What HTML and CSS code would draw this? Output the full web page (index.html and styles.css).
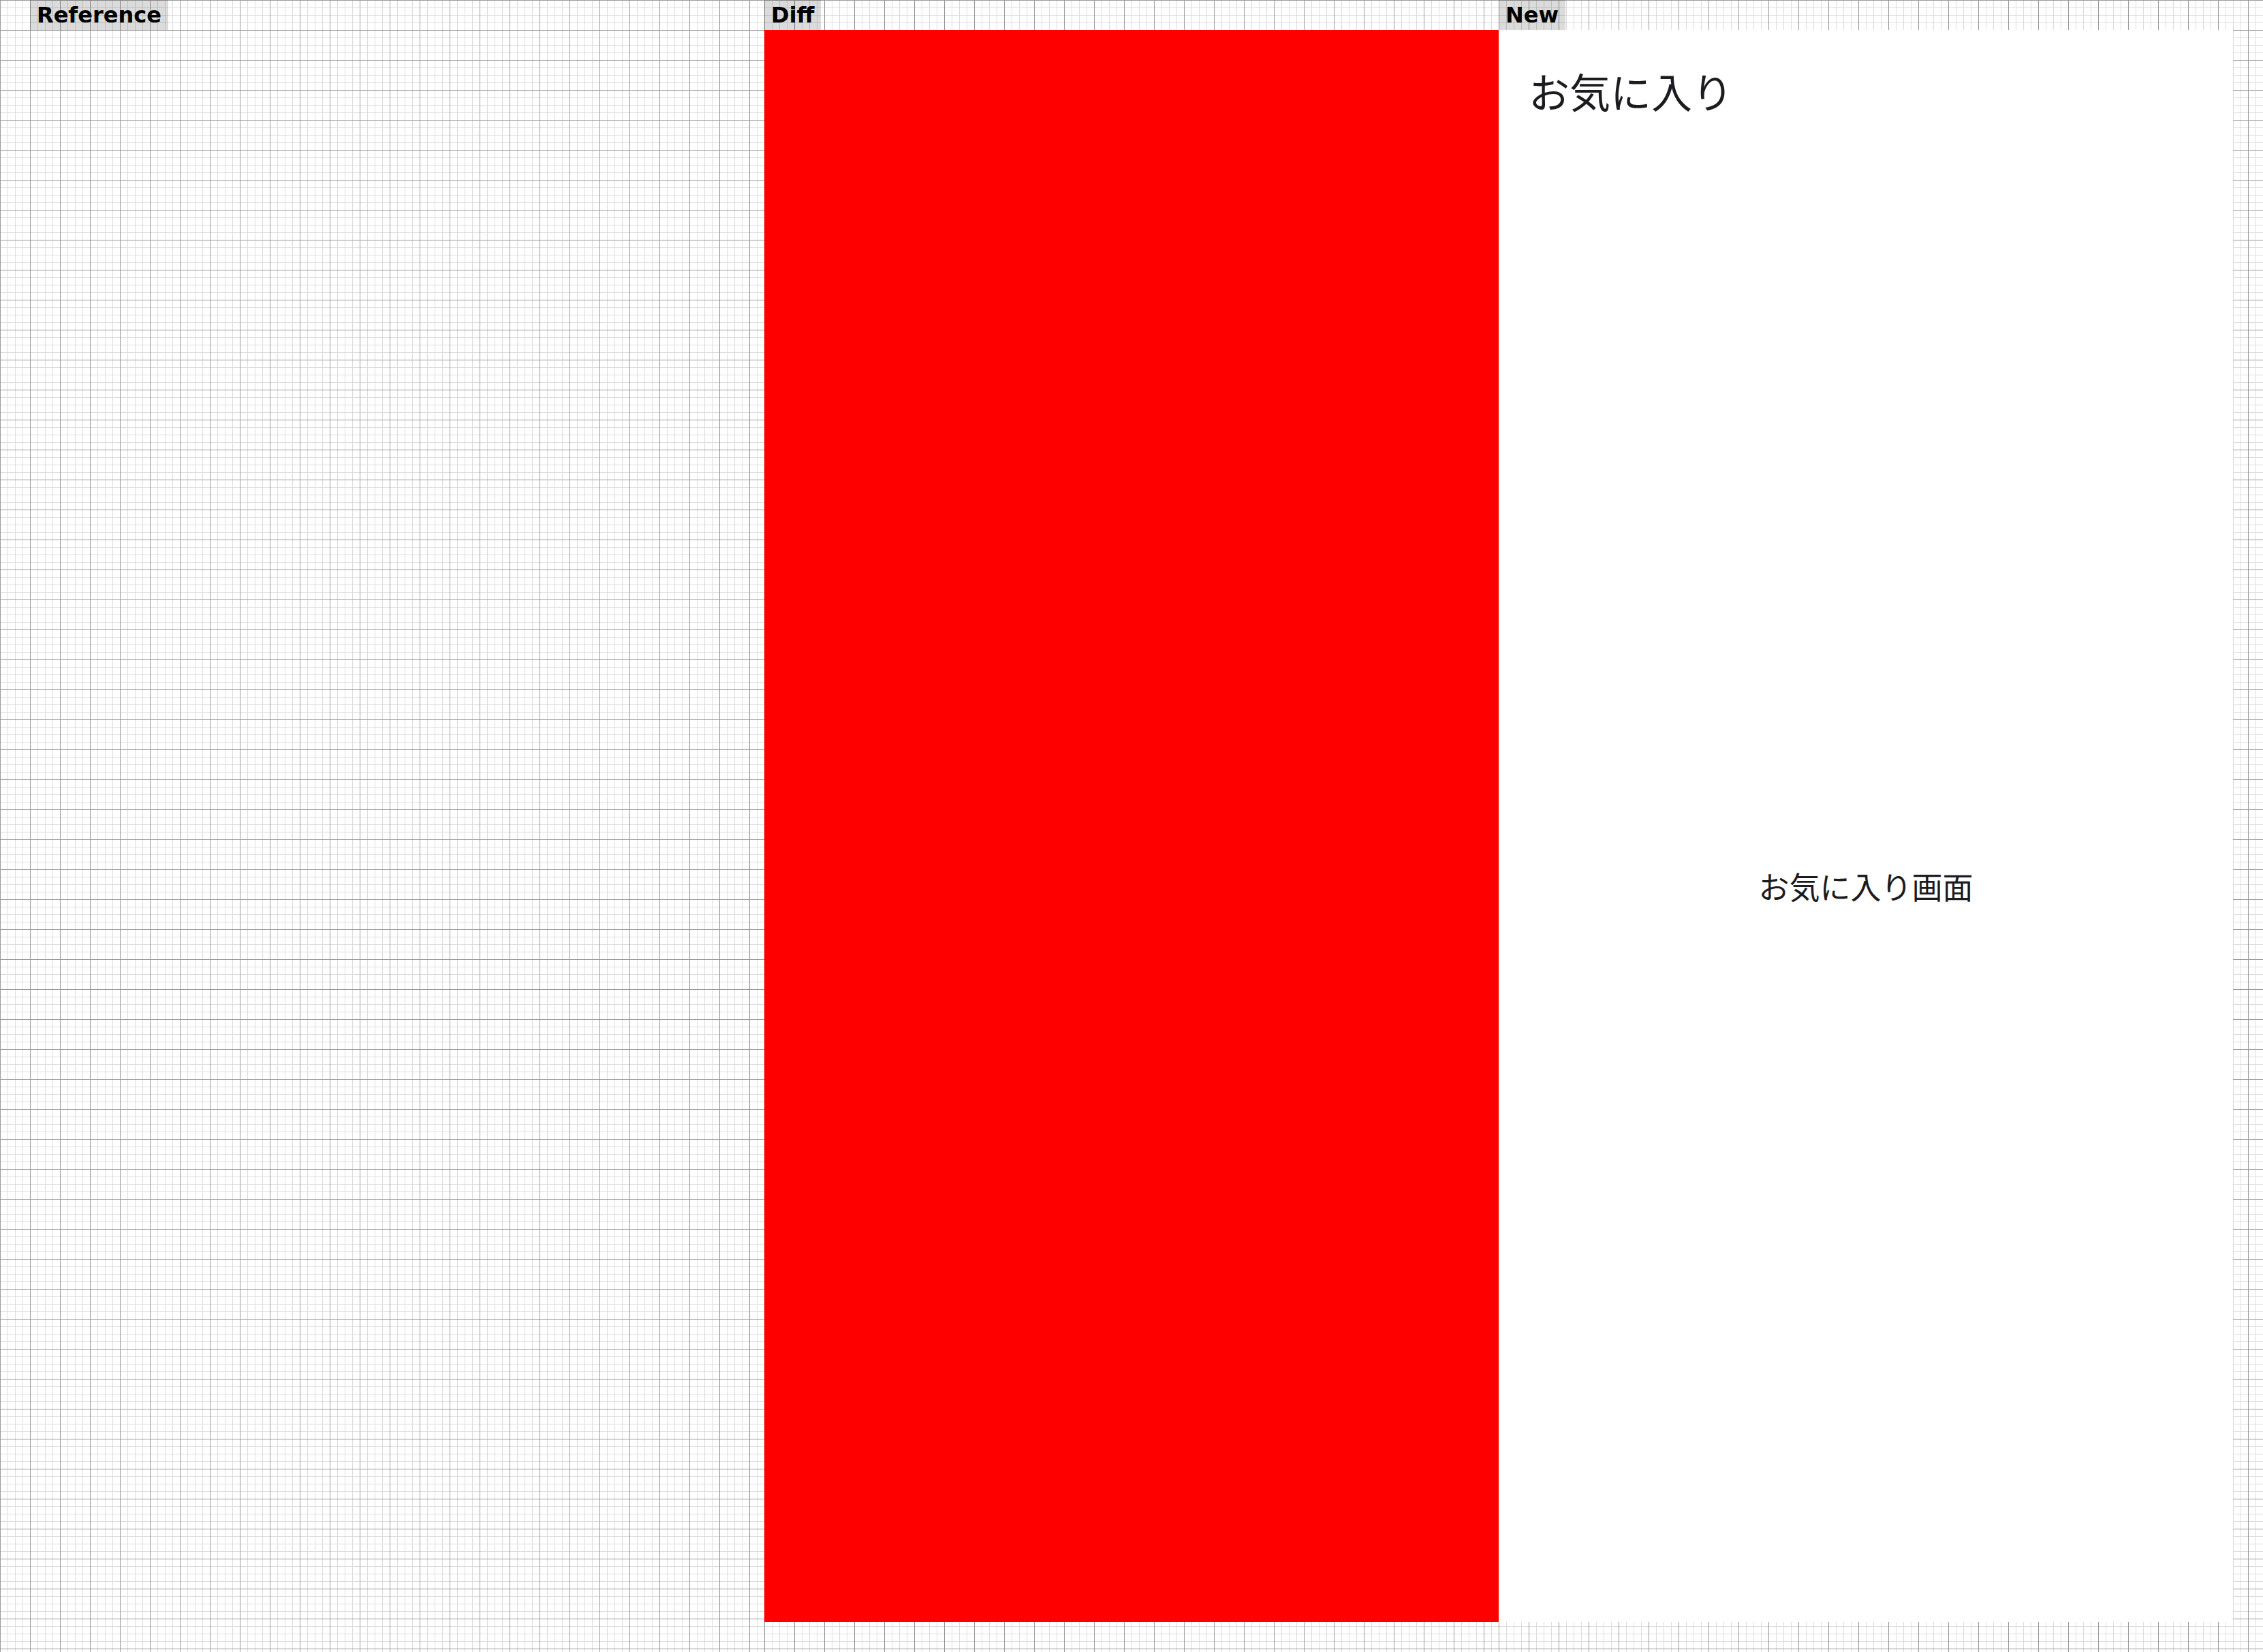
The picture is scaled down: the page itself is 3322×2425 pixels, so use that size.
FILE: index.html
```html
<!DOCTYPE html>
<html lang="ja">
<head>
<meta charset="utf-8">
<title>Reference / Diff / New</title>
<link rel="stylesheet" href="styles.css">
</head>
<body>
<div class="board">
  <section class="column">
    <div class="label">Reference</div>
    <div class="shot shot-empty"></div>
  </section>
  <section class="column">
    <div class="label">Diff</div>
    <div class="shot shot-diff"></div>
  </section>
  <section class="column">
    <div class="label">New</div>
    <div class="shot shot-new">
      <header class="app-bar">
        <h1 class="app-title">お気に入り</h1>
      </header>
      <main class="app-content">
        <p class="app-text">お気に入り画面</p>
      </main>
    </div>
  </section>
</div>
</body>
</html>
```

FILE: styles.css
```css
html, body {
  margin: 0;
  padding: 0;
}

body {
  width: 3322px;
  height: 2425px;
  overflow: hidden;
  background-color: #ffffff;
  background-image:
    linear-gradient(to right, #9a9a9a 1px, transparent 1px),
    linear-gradient(to bottom, #9a9a9a 1px, transparent 1px),
    linear-gradient(to right, #dddddd 1px, transparent 1px),
    linear-gradient(to bottom, #dddddd 1px, transparent 1px);
  background-size: 44px 44px, 44px 44px, 11px 11px, 11px 11px;
}

.board {
  display: flex;
  padding: 0 44px;
  height: 2425px;
  box-sizing: border-box;
}

.column {
  width: 1078px;
  height: 2425px;
  padding-bottom: 44px;
  box-sizing: border-box;
  display: flex;
  flex-direction: column;
  align-items: flex-start;
  background-color: #ffffff;
  background-image:
    linear-gradient(to right, #9a9a9a 1px, transparent 1px),
    linear-gradient(to bottom, #9a9a9a 1px, transparent 1px),
    linear-gradient(to right, #dddddd 1px, transparent 1px),
    linear-gradient(to bottom, #dddddd 1px, transparent 1px);
  background-size: 44px 44px, 44px 44px, 11px 11px, 11px 11px;
}

.label {
  height: 44px;
  line-height: 44px;
  padding: 0 10px;
  background: rgba(0, 0, 0, 0.14);
  color: #000000;
  font-family: "DejaVu Sans", sans-serif;
  font-weight: bold;
  font-size: 32px;
  white-space: nowrap;
}

.shot {
  width: 1078px;
  height: 2337px;
  flex: none;
}

.shot-diff {
  background: #ff0000;
}

.shot-new {
  background: #ffffff;
  display: flex;
  flex-direction: column;
  font-family: "Noto Sans CJK JP", "Noto Sans", sans-serif;
  color: #1d1b20;
}

.app-bar {
  height: 176px;
  flex: none;
  display: flex;
  align-items: center;
  padding-left: 44px;
}

.app-title {
  margin: 0;
  font-size: 60px;
  font-weight: 400;
  line-height: normal;
}

.app-content {
  flex: 1;
  display: flex;
  align-items: center;
  justify-content: center;
}

.app-text {
  margin: 0;
  font-size: 45px;
  line-height: normal;
}
```
